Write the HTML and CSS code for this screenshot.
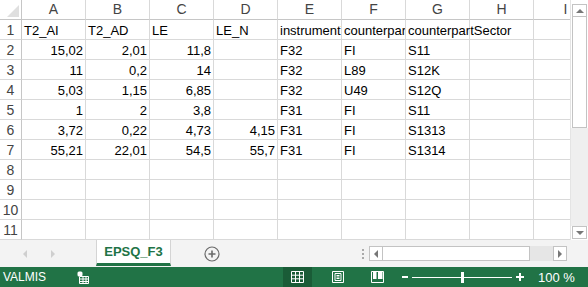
FILE: index.html
```html
<!DOCTYPE html>
<html lang="fi">
<head>
    <title>EPSQ_F3</title>
    <meta charset="UTF-8">
    <link rel="stylesheet" href="styles.css">
</head>
<body>
    <div class="main">
        <div class="sheet">
            <div class="c corner"><span class="tri"></span></div>
            <div class="c colhead">A</div>
            <div class="c colhead">B</div>
            <div class="c colhead">C</div>
            <div class="c colhead">D</div>
            <div class="c colhead">E</div>
            <div class="c colhead">F</div>
            <div class="c colhead">G</div>
            <div class="c colhead">H</div>
            <div class="c colhead">I</div>

            <div class="c rowhead">1</div>
            <div class="c">T2_AI</div>
            <div class="c">T2_AD</div>
            <div class="c">LE</div>
            <div class="c">LE_N</div>
            <div class="c">instrumentType</div>
            <div class="c">counterpartArea</div>
            <div class="c spill">counterpartSector</div>
            <div class="c"></div>
            <div class="c"></div>

            <div class="c rowhead">2</div>
            <div class="c n">15,02</div>
            <div class="c n">2,01</div>
            <div class="c n">11,8</div>
            <div class="c"></div>
            <div class="c">F32</div>
            <div class="c">FI</div>
            <div class="c">S11</div>
            <div class="c"></div>
            <div class="c"></div>

            <div class="c rowhead">3</div>
            <div class="c n">11</div>
            <div class="c n">0,2</div>
            <div class="c n">14</div>
            <div class="c"></div>
            <div class="c">F32</div>
            <div class="c">L89</div>
            <div class="c">S12K</div>
            <div class="c"></div>
            <div class="c"></div>

            <div class="c rowhead">4</div>
            <div class="c n">5,03</div>
            <div class="c n">1,15</div>
            <div class="c n">6,85</div>
            <div class="c"></div>
            <div class="c">F32</div>
            <div class="c">U49</div>
            <div class="c">S12Q</div>
            <div class="c"></div>
            <div class="c"></div>

            <div class="c rowhead">5</div>
            <div class="c n">1</div>
            <div class="c n">2</div>
            <div class="c n">3,8</div>
            <div class="c"></div>
            <div class="c">F31</div>
            <div class="c">FI</div>
            <div class="c">S11</div>
            <div class="c"></div>
            <div class="c"></div>

            <div class="c rowhead">6</div>
            <div class="c n">3,72</div>
            <div class="c n">0,22</div>
            <div class="c n">4,73</div>
            <div class="c n">4,15</div>
            <div class="c">F31</div>
            <div class="c">FI</div>
            <div class="c">S1313</div>
            <div class="c"></div>
            <div class="c"></div>

            <div class="c rowhead">7</div>
            <div class="c n">55,21</div>
            <div class="c n">22,01</div>
            <div class="c n">54,5</div>
            <div class="c n">55,7</div>
            <div class="c">F31</div>
            <div class="c">FI</div>
            <div class="c">S1314</div>
            <div class="c"></div>
            <div class="c"></div>

            <div class="c rowhead">8</div>
            <div class="c"></div><div class="c"></div><div class="c"></div><div class="c"></div>
            <div class="c"></div><div class="c"></div><div class="c"></div><div class="c"></div><div class="c"></div>

            <div class="c rowhead">9</div>
            <div class="c"></div><div class="c"></div><div class="c"></div><div class="c"></div>
            <div class="c"></div><div class="c"></div><div class="c"></div><div class="c"></div><div class="c"></div>

            <div class="c rowhead">10</div>
            <div class="c"></div><div class="c"></div><div class="c"></div><div class="c"></div>
            <div class="c"></div><div class="c"></div><div class="c"></div><div class="c"></div><div class="c"></div>

            <div class="c rowhead">11</div>
            <div class="c"></div><div class="c"></div><div class="c"></div><div class="c"></div>
            <div class="c"></div><div class="c"></div><div class="c"></div><div class="c"></div><div class="c"></div>
        </div>

        <div class="vscroll">
            <div class="sbtn up"><span class="arr-up"></span></div>
            <div class="vthumb"></div>
            <div class="vtrack"></div>
            <div class="sbtn down"><span class="arr-down"></span></div>
        </div>
    </div>

    <div class="tabbar">
        <div class="tabnav">
            <span class="arr-left"></span>
            <span class="arr-right"></span>
        </div>
        <div class="tab">EPSQ_F3</div>
        <div class="addsheet">
            <svg width="16" height="16" viewBox="0 0 16 16">
                <circle cx="8" cy="8" r="7" fill="none" stroke="#6a6a6a" stroke-width="1.2"/>
                <path d="M8 4.5v7M4.5 8h7" stroke="#6a6a6a" stroke-width="1.6"/>
            </svg>
        </div>
        <div class="tabspace"></div>
        <div class="splitter"><i></i><i></i><i></i></div>
        <div class="hscroll">
            <div class="sbtn"><span class="arr-left dark"></span></div>
            <div class="hthumb"></div>
            <div class="htrack"></div>
            <div class="sbtn"><span class="arr-right dark"></span></div>
        </div>
    </div>

    <div class="status">
        <div class="ready">VALMIS</div>
        <svg class="macro" width="12" height="13" viewBox="0 0 12 13">
            <rect x="0.5" y="0.5" width="5" height="5" rx="1.5" fill="#fff"/>
            <path d="M3 5.5h8.5v7h-9v-7M3 8h8.5M3 10.5h8.5M6 5.5v7M9 5.5v7" fill="none" stroke="#fff" stroke-width="1"/>
        </svg>
        <div class="spacer"></div>
        <div class="viewbtn active">
            <svg width="13" height="12" viewBox="0 0 13 12">
                <path d="M0.5 0.5h12v11h-12zM0.5 4.2h12M0.5 7.8h12M4.5 0.5v11M8.5 0.5v11" fill="none" stroke="#fff" stroke-width="1"/>
            </svg>
        </div>
        <div class="viewbtn">
            <svg width="12" height="12" viewBox="0 0 12 12">
                <path d="M0.5 0.5h11v11h-11zM3 2.5h6v7h-6zM4.5 4.5h3M4.5 6h3M4.5 7.5h3" fill="none" stroke="#fff" stroke-width="1"/>
            </svg>
        </div>
        <div class="viewbtn last">
            <svg width="13" height="12" viewBox="0 0 13 12">
                <path d="M0.5 0.5h12v11h-12z" fill="none" stroke="#fff" stroke-width="1"/>
                <rect x="2" y="1" width="3.5" height="7" fill="#fff"/>
                <rect x="7" y="1" width="4.5" height="7" fill="#fff"/>
            </svg>
        </div>
        <div class="zoomminus"></div>
        <div class="slider"><span class="knob"></span></div>
        <div class="zoomplus"></div>
        <div class="zoomtext">100 %</div>
    </div>
</body>
</html>
```

FILE: styles.css
```css
* {
    margin: 0;
    padding: 0;
    box-sizing: border-box;
}

body {
    width: 588px;
    height: 287px;
    overflow: hidden;
    font-family: "Liberation Sans", Arial, sans-serif;
    background-color: #fff;
}

.main {
    display: flex;
    height: 240px;
}

.sheet {
    display: grid;
    grid-template-columns: 22px repeat(9, 64px);
    grid-auto-rows: 20px;
    width: 570px;
    overflow: hidden;
    background-color: #fff;
}

.c {
    border-right: 1px solid #d9d9d9;
    border-bottom: 1px solid #d9d9d9;
    padding: 1px 2px 0 2px;
    font-size: 13px;
    line-height: 19px;
    color: #000;
    white-space: nowrap;
    overflow: hidden;
}

.c.n {
    text-align: right;
}

.c.spill {
    overflow: visible;
}

.colhead {
    text-align: center;
    color: #444;
    font-size: 14px;
    border-bottom-color: #c6c6c6;
    padding-top: 0;
}

.rowhead {
    text-align: center;
    color: #444;
    font-size: 14px;
    padding: 1px 0 0 0;
    border-right-color: #c6c6c6;
}

.corner {
    position: relative;
    border-color: #c6c6c6;
}

.corner .tri {
    position: absolute;
    right: 2px;
    bottom: 2px;
    width: 0;
    height: 0;
    border-left: 12px solid transparent;
    border-bottom: 12px solid #dfdfdf;
}

.vscroll {
    width: 18px;
    display: flex;
    flex-direction: column;
    align-items: center;
    padding-top: 4px;
    background-color: #fff;
    border-left: 1px solid #e4e4e4;
}

.sbtn {
    width: 15px;
    height: 13px;
    border: 1px solid #c3c3c3;
    background-color: #fff;
    display: flex;
    align-items: center;
    justify-content: center;
}

.vthumb {
    width: 15px;
    height: 111px;
    border: 1px solid #c3c3c3;
    border-top: none;
    background-color: #fff;
}

.vtrack {
    flex: 1;
    width: 17px;
    background-color: #efefef;
}

.vscroll .down {
    margin-bottom: 1px;
}

.arr-up, .arr-down {
    width: 0;
    height: 0;
    border-left: 4px solid transparent;
    border-right: 4px solid transparent;
}

.arr-up {
    border-bottom: 4px solid #777;
}

.arr-down {
    border-top: 4px solid #777;
}

.arr-left, .arr-right {
    width: 0;
    height: 0;
    border-top: 4px solid transparent;
    border-bottom: 4px solid transparent;
}

.arr-left {
    border-right: 4px solid #cfcfcf;
}

.arr-right {
    border-left: 4px solid #cfcfcf;
}

.arr-left.dark {
    border-right-color: #777;
}

.arr-right.dark {
    border-left-color: #777;
}

.tabbar {
    display: flex;
    height: 27px;
    background-color: #f3f3f3;
}

.tabnav {
    width: 96px;
    display: flex;
    align-items: center;
    padding-left: 23px;
    gap: 24px;
}

.tab {
    width: 75px;
    height: 26px;
    background-color: #fff;
    border-left: 1px solid #d4d4d4;
    border-right: 1px solid #d4d4d4;
    border-bottom: 3px solid #217346;
    color: #217346;
    font-weight: bold;
    font-size: 13px;
    text-align: center;
    line-height: 23px;
}

.addsheet {
    width: 82px;
    display: flex;
    align-items: center;
    justify-content: center;
}

.tabspace {
    flex: 1;
}

.splitter {
    width: 16px;
    display: flex;
    flex-direction: column;
    align-items: center;
    justify-content: center;
    gap: 2px;
    padding-left: 4px;
}

.splitter i {
    width: 2px;
    height: 2px;
    background-color: #aaa;
}

.hscroll {
    display: flex;
    align-items: center;
    width: 219px;
    padding-right: 21px;
}

.hscroll .sbtn {
    width: 14px;
    height: 15px;
}

.hthumb {
    width: 147px;
    height: 15px;
    border: 1px solid #c3c3c3;
    border-left: none;
    background-color: #fff;
}

.htrack {
    width: 23px;
    height: 15px;
    background-color: #e6e6e6;
}

.status {
    display: flex;
    align-items: center;
    height: 20px;
    background-color: #217346;
    color: #fff;
    font-size: 12px;
}

.ready {
    width: 77px;
    padding-left: 3px;
}

.macro {
    display: block;
}

.spacer {
    flex: 1;
}

.viewbtn {
    width: 29px;
    height: 20px;
    margin-right: 11px;
    display: flex;
    align-items: center;
    justify-content: center;
}

.viewbtn.last {
    margin-right: 0;
}

.viewbtn.active {
    background-color: #1a5c37;
}

.zoomminus {
    width: 10px;
    height: 2px;
    margin-left: 8px;
    display: flex;
    justify-content: center;
}

.zoomminus::before {
    content: "";
    width: 6px;
    height: 2px;
    background-color: #fff;
}

.slider {
    position: relative;
    width: 100px;
    height: 1px;
    margin-left: 2px;
    background-color: #fff;
}

.knob {
    position: absolute;
    left: 49px;
    top: -5px;
    width: 3px;
    height: 11px;
    background-color: #fff;
}

.zoomplus {
    position: relative;
    width: 10px;
    height: 10px;
    margin-left: 3px;
}

.zoomplus::before, .zoomplus::after {
    content: "";
    position: absolute;
    background-color: #fff;
}

.zoomplus::before {
    left: 1px;
    top: 4px;
    width: 8px;
    height: 2px;
}

.zoomplus::after {
    left: 4px;
    top: 1px;
    width: 2px;
    height: 8px;
}

.zoomtext {
    width: 63px;
    padding-left: 13px;
    font-size: 13px;
}
```
